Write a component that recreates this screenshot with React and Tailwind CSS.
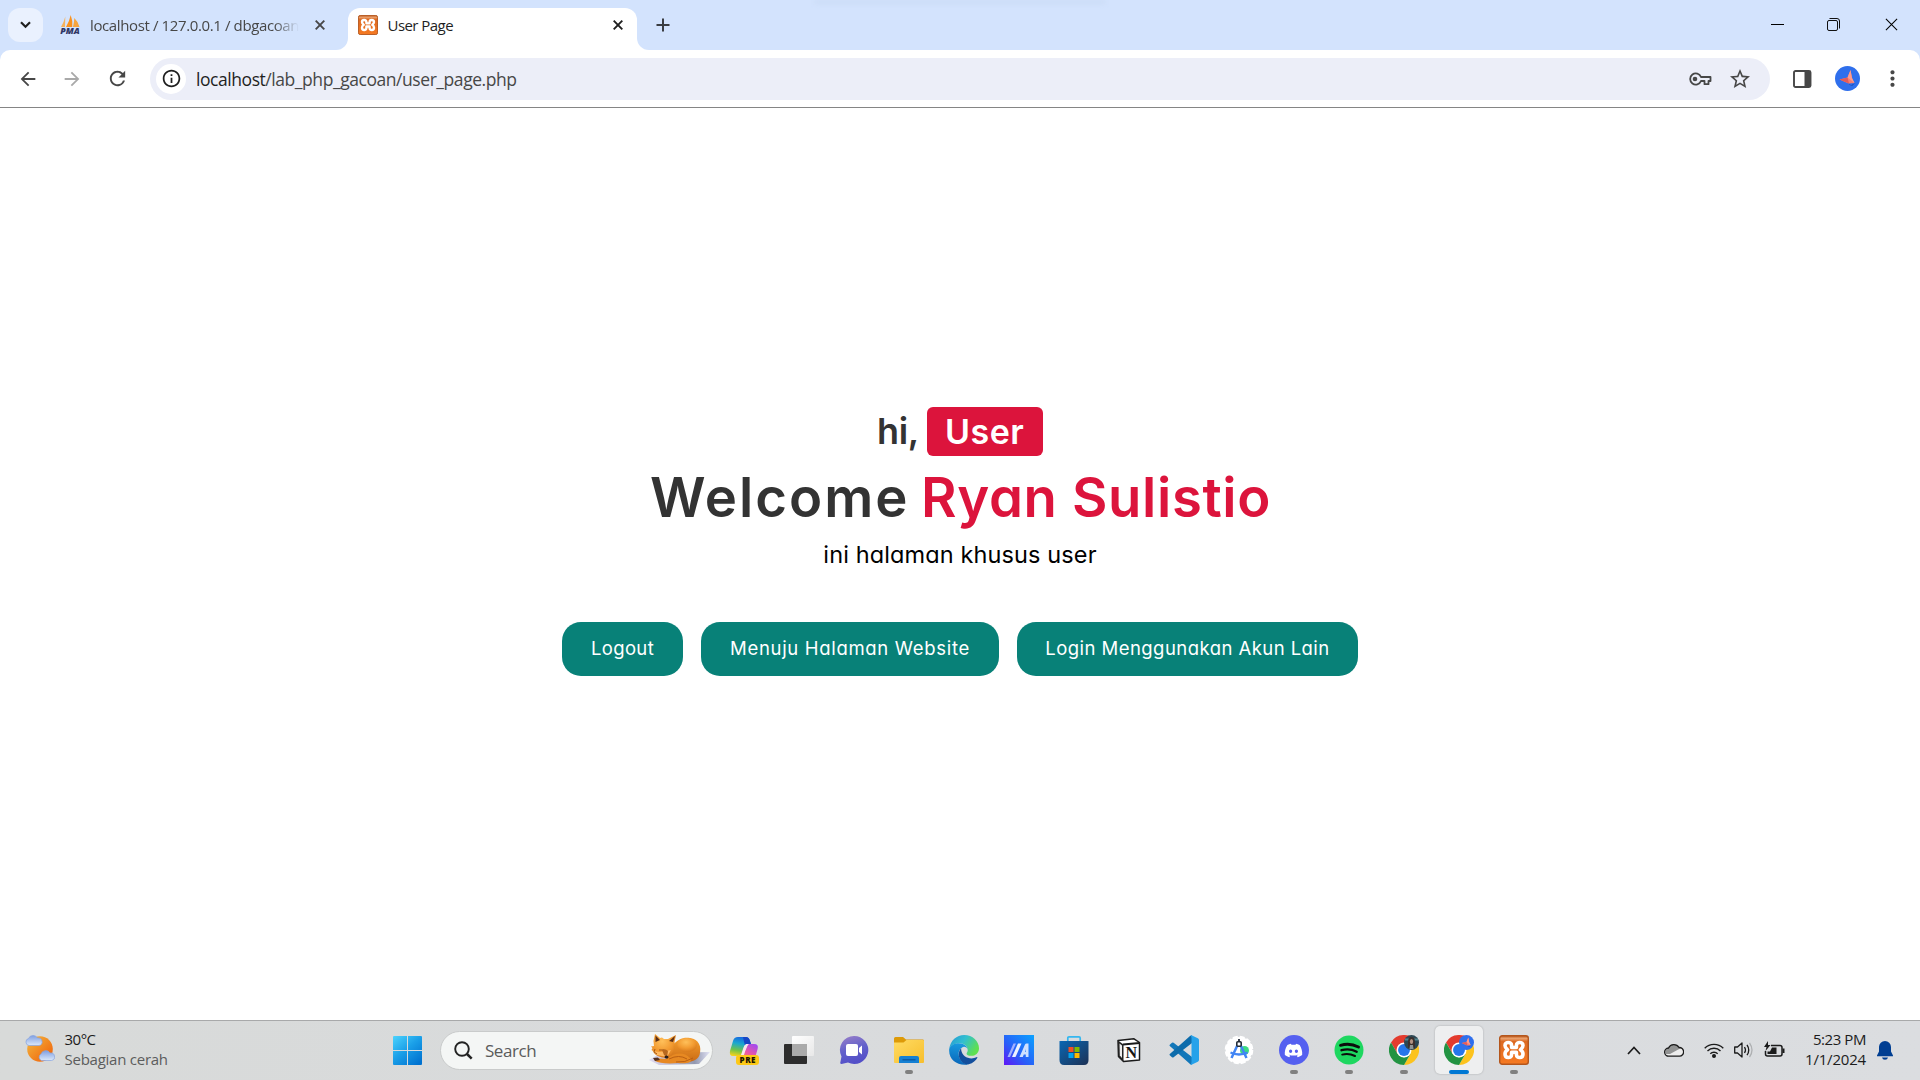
import React from "react";
import { MdArrowBack, MdArrowForward, MdRefresh, MdInfoOutline, MdStarBorder, MdMoreVert } from "react-icons/md";
import { FaDiscord } from "react-icons/fa";

function PmaIcon() {
  return (
    <svg width="20" height="20" viewBox="0 0 20 20" className="shrink-0">
      <path d="M1 12 Q4 7 5.3 1.5 L5 12Z" fill="#f6b25c" />
      <path d="M6 12 Q9.500 6 10.700 0 Q13 6 12.300 12Z" fill="#f9921e" />
      <path d="M13 12 Q14.200 7 14.300 3 Q18.500 7 19.500 12Z" fill="#f7a53e" />
      <text x="10" y="19" textAnchor="middle" textLength="19.500" lengthAdjust="spacingAndGlyphs" fontFamily="Open Sans, sans-serif" fontWeight="800" fontStyle="italic" fontSize="8" fill="#2f3765">PMA</text>
    </svg>
  );
}

function XamppIcon({ size }) {
  return (
    <svg width={size} height={size} viewBox="0 0 30 30" className="shrink-0">
      <defs>
        <linearGradient id="xa" x1="0" y1="0" x2="0" y2="1">
          <stop offset="0" stopColor="#c05a1c" />
          <stop offset="0.1" stopColor="#e9a06c" />
          <stop offset="0.2" stopColor="#dd6a22" />
          <stop offset="1" stopColor="#f67a22" />
        </linearGradient>
      </defs>
      <rect x="0.7" y="0.7" width="28.600" height="28.600" rx="2.500" fill="url(#xa)" stroke="#b4561d" strokeWidth="1.400" />
      <path d="M12.600 12.500V10.500C12.600 6.500 6 6.500 6 10.500C6 12.500 7.200 13.500 8.600 14.800C6.800 16 6 17.300 6 19C6 23.600 12.600 23.600 12.600 19.500V17.200H17.400V19.500C17.400 23.600 24 23.600 24 19C24 17.300 23.200 16 21.400 14.800C22.800 13.500 24 12.500 24 10.500C24 6.500 17.400 6.500 17.400 10.500V12.500Z" fill="none" stroke="#fff" strokeWidth="3.600" strokeLinejoin="round" />
    </svg>
  );
}

function Cross({ className, size = 10, w = 1.9 }) {
  return (
    <svg width={size} height={size} viewBox="0 0 10 10" className={className}>
      <path d="M.7 .7 9.300 9.300M9.300 .7 .7 9.300" stroke="currentColor" strokeWidth={w} fill="none" />
    </svg>
  );
}

function OrigamiAvatar({ size }) {
  return (
    <svg width={size} height={size} viewBox="0 0 25 25">
      <circle cx="12.500" cy="12.500" r="12.500" fill="#2f6fec" />
      <path d="M12 16 17 20 20 17 15.500 19.500Z" fill="#1b49b0" />
      <path d="M4.500 13.500 12.500 11.500 15.500 4 17 12 19.500 17 13.500 17.500Z" fill="#f77f72" />
      <path d="M15.500 4 17 12 19.500 17 12.500 11.500Z" fill="#ff9c8c" />
      <path d="M4.500 13.500 12.500 11.500 14 17.500Z" fill="#e45b58" />
    </svg>
  );
}

function TabStrip() {
  return (
    <div className="relative flex h-[50px] shrink-0 items-start bg-[#d3e3fd]">
      <div className="absolute left-[815px] top-0 h-1 w-[290px] bg-[#cbdcf6] blur-[2px]" />
      <div className="ml-2 mt-2 flex h-[34px] w-[35px] items-center justify-center rounded-[12px] bg-[#eaf1fe]">
        <svg width="11" height="8" viewBox="0 0 11 8"><path d="M1 1.300 5.500 5.800 10 1.300" stroke="#1f1f1f" strokeWidth="2.200" fill="none" /></svg>
      </div>
      <div className="ml-[17px] flex h-[50px] w-[276px] items-center">
        <PmaIcon />
        <div className="ml-[10px] w-[209px] overflow-hidden whitespace-nowrap text-[15px] tracking-[-0.380px] text-[#474747] [mask-image:linear-gradient(to_right,black_88%,transparent)]">localhost / 127.0.0.1 / dbgacoan</div>
        <Cross className="ml-4 text-[#474747]" />
      </div>
      <div className="relative mt-2 flex h-[42px] w-[301px] items-end">
        <div className="h-3 w-3 bg-white">
          <div className="h-3 w-3 rounded-br-[12px] bg-[#d3e3fd]" />
        </div>
        <div className="flex h-[42px] w-[289px] items-center rounded-t-[12px] bg-white pb-2 pl-[10px]">
          <XamppIcon size={20} />
          <div className="ml-[9.5px] flex-1 text-[15px] tracking-[-0.550px] text-[#1f1f1f]">User Page</div>
          <Cross className="mr-[14px] text-[#1f1f1f]" />
        </div>
      </div>
      <div className="flex h-[50px] items-end">
        <div className="h-3 w-3 bg-white">
          <div className="h-3 w-3 rounded-bl-[12px] bg-[#d3e3fd]" />
        </div>
      </div>
      <svg className="ml-[7px] mt-[18px]" width="14" height="14" viewBox="0 0 14 14"><path d="M7 .5V13.500M.5 7H13.500" stroke="#3a3d42" strokeWidth="2" /></svg>
      <div className="ml-auto flex h-[49px] items-center pr-[22px] text-black">
        <div className="h-px w-[13px] bg-black" />
        <svg className="ml-[43px]" width="13" height="13" viewBox="0 0 13 13" fill="none" stroke="#111"><rect x=".5" y="2.500" width="10" height="10" rx="1.500" /><path d="M2.500 .5H10Q12.500 .5 12.500 3V10.500" /></svg>
        <Cross className="ml-[45px]" size={13} w={0.8} />
      </div>
    </div>
  );
}

function Toolbar() {
  return (
    <div className="h-[58px] shrink-0 bg-[#d3e3fd]">
      <div className="flex h-[58px] items-center rounded-t-[10px] border-b border-[#858585] bg-white text-[#474747]">
        <MdArrowBack className="ml-[17px]" size={22} />
        <MdArrowForward className="ml-[22px] text-[#a9a9a9]" size={22} />
        <MdRefresh className="ml-[23px]" size={23} />
        <div className="ml-[21px] flex h-[42px] w-[1620px] items-center rounded-full bg-[#eceef8] pl-[6px]">
          <div className="flex h-[30px] w-[30px] items-center justify-center rounded-full bg-white text-[#1f1f1f]">
            <MdInfoOutline size={21} />
          </div>
          <div className="ml-[10px] flex-1 pt-[2px] text-[17.5px] tracking-[-0.440px]">
            <span className="text-[#1f1f1f]">localhost</span>/lab_php_gacoan/user_page.php
          </div>
          <svg width="24" height="14" viewBox="0 0 24 14" fill="none" stroke="#474747" strokeWidth="1.800"><path d="M13 5H22.500V9H20.500V12.200H16.500V9H13A5.600 5.600 0 1 1 13 5Z" strokeLinejoin="round" /><circle cx="7" cy="7" r="2.300" fill="#474747" stroke="none" /></svg>
          <MdStarBorder size={24} className="ml-4 mr-[18px]" />
        </div>
        <svg className="ml-[23px]" width="19" height="18" viewBox="0 0 19 18"><rect x="1" y="1" width="16.500" height="16" rx="1.500" fill="none" stroke="#474747" strokeWidth="1.900" /><path d="M11.500 1H17V17H11.500Z" fill="#474747" /></svg>
        <div className="ml-[23px] pb-px"><OrigamiAvatar size={25} /></div>
        <MdMoreVert className="ml-5" size={25} />
      </div>
    </div>
  );
}

function Button({ children }) {
  return <div className="h-[54px] rounded-[19px] bg-[#088178] text-center text-[18.5px] leading-[53px]">{children}</div>;
}

function Content() {
  return (
    <main className="flex flex-1 flex-col items-center bg-white pt-[299px] font-['Inter',sans-serif] [font-feature-settings:'cv11']">
      <div className="flex h-[49px] leading-[49px]">
        <div className="w-[50px] text-[36px] font-semibold tracking-[-0.300px] text-[#333]">hi,</div>
        <div className="w-[116px] rounded-[6px] bg-[#dc143c] pl-[18px] text-[34px] font-semibold tracking-[0.500px] text-white">User</div>
      </div>
      <div className="flex h-20 whitespace-nowrap text-[54.5px] font-semibold leading-[82px]">
        <div className="w-[271px] tracking-[2px] text-[#333]">Welcome</div>
        <div className="w-[349px] tracking-[0.650px] text-[#dc143c]">Ryan Sulistio</div>
      </div>
      <div className="h-[37px] text-[23.5px] leading-[37px] tracking-[0.120px] text-black">ini halaman khusus user</div>
      <div className="mt-[49px] flex whitespace-nowrap text-white">
        <div className="w-[139px]"><div className="w-[121px] tracking-[0.350px]"><Button>Logout</Button></div></div>
        <div className="w-[316px]"><div className="w-[298px] tracking-[0.680px]"><Button>Menuju Halaman Website</Button></div></div>
        <div className="w-[341px] tracking-[0.450px]"><Button>Login Menggunakan Akun Lain</Button></div>
      </div>
    </main>
  );
}

function Weather() {
  return (
    <svg width="30" height="29" viewBox="0 0 30 29">
      <defs>
        <linearGradient id="sun" x1="0" y1="0" x2="1" y2="1"><stop offset="0.100" stopColor="#f3b13b" /><stop offset="0.900" stopColor="#f0640c" /></linearGradient>
        <linearGradient id="cl" x1="0" y1="0" x2="0" y2="1"><stop offset="0" stopColor="#7f9fe2" /><stop offset="1" stopColor="#dbe8fa" /></linearGradient>
      </defs>
      <circle cx="15" cy="15" r="12.800" fill="url(#sun)" />
      <path d="M4 11.500A3.600 3.600 0 0 1 3.500 4.500 5 5 0 0 1 12.500 4 3.800 3.800 0 0 1 14 11.500Z" fill="url(#cl)" stroke="#86a3e0" strokeWidth=".7" />
      <path d="M16.500 26.500A3.600 3.600 0 0 1 16 20 5 5 0 0 1 25 19 3.800 3.800 0 0 1 26.500 26.500Z" fill="url(#cl)" stroke="#86a3e0" strokeWidth=".7" />
    </svg>
  );
}

function StartIcon() {
  return (
    <svg width="29" height="29" viewBox="0 0 29 29">
      <defs><linearGradient id="win" gradientUnits="userSpaceOnUse" x1="0" y1="0" x2="24" y2="29"><stop offset="0" stopColor="#4cd3fd" /><stop offset=".5" stopColor="#1a9fe8" /><stop offset="1" stopColor="#0072d0" /></linearGradient></defs>
      <path d="M1 0H14V14H0V1Q0 0 1 0ZM15 0H28Q29 0 29 1V14H15ZM0 15H14V29H1Q0 29 0 28ZM15 15H29V28Q29 29 28 29H15Z" fill="url(#win)" />
    </svg>
  );
}

function Fox() {
  return (
    <svg width="62" height="34" viewBox="0 0 62 34">
      <defs>
        <linearGradient id="fb" x1="0" y1="0" x2="0" y2="1"><stop offset="0" stopColor="#f6a02e" /><stop offset="1" stopColor="#c96a15" /></linearGradient>
        <linearGradient id="fs" x1="0" y1="0" x2="1" y2="0"><stop offset="0" stopColor="#dcd6f2" /><stop offset=".75" stopColor="#8088a4" /><stop offset="1" stopColor="#dfe0f6" /></linearGradient>
        <radialGradient id="fh" cx=".45" cy=".3" r=".7"><stop offset="0" stopColor="#ffc05a" /><stop offset=".6" stopColor="#f29a30" /><stop offset="1" stopColor="#d87a1c" /></radialGradient>
      </defs>
      <path d="M0 27 12 20 61 19 50 31 10 32Z" fill="url(#fs)" opacity=".85" />
      <path d="M23 14C28 5 36 4 41 5 50 6 53 14 50.500 22 48 29 38 30 28 29L17 26Z" fill="url(#fb)" />
      <ellipse cx="38" cy="12" rx="10" ry="7" fill="url(#fh)" />
      <path d="M5 13 4.500 8 6 1 11 5 13 4.500 15 6 19 6 27 2 25.500 9 26 12 24.500 13 25 16C24 20 21 24 18 25 11 25 5 22 4 18L2.500 17 3.500 15 2 13.500Z" fill="url(#fh)" />
      <path d="M6.500 9 6.500 2.500 11 7ZM20 8 26 3 24 9Z" fill="#5c2f17" />
      <path d="M3.500 18 8 22 18 24 22 17 17 18 11 19Z" fill="#ffb861" />
      <path d="M6 16 5 19 8 21M10 17 15 17" stroke="#a35510" strokeWidth="1" fill="none" />
      <path d="M18 26C26 19 35 19 41 25 45 30 36 31 29 30 18 31 10 30 6 28L5 25Z" fill="#e78922" />
      <path d="M20 26Q30 21 38 26M27 29Q36 30 44 25" stroke="#b95f12" strokeWidth="1" fill="none" />
      <path d="M13 17Q16 15 19 18L18 24 15 22Z" fill="#b7681e" />
      <ellipse cx="17.500" cy="24" rx="2" ry="1.500" fill="#281d1d" />
      <path d="M4 25 9 24.500 11 27 6 28Z" fill="#54301f" />
    </svg>
  );
}

function Copilot() {
  return (
    <svg width="30" height="30" viewBox="0 0 30 30">
      <defs>
        <linearGradient id="ca" x1=".5" y1="0" x2=".3" y2="1"><stop offset="0" stopColor="#1668e0" /><stop offset=".35" stopColor="#1ba8cf" /><stop offset=".7" stopColor="#6fc34a" /><stop offset="1" stopColor="#f4d21c" /></linearGradient>
        <linearGradient id="cb" x1=".8" y1="0" x2=".2" y2="1"><stop offset="0" stopColor="#a24af0" /><stop offset=".5" stopColor="#e957a8" /><stop offset="1" stopColor="#ff8d50" /></linearGradient>
      </defs>
      <path d="M19 9H25Q30 9 28.600 14L26 23Q25 27 20 27H11Z" fill="url(#cb)" />
      <path d="M9 2H17Q20 2 21 6L22 9H19Q16 9 15 12L13 19Q12 21 9 21H4Q0 21 1 16L4 6Q5 2 9 2Z" fill="url(#ca)" />
      <path d="M14 2H17Q20 2 21 6L22 9H19Q17 9 16 11Z" fill="#1746c5" />
      <path d="M17 9Q15 10 14 14L12 20H15Q18 10 20 9Z" fill="#f8e8ee" />
      <rect x="7" y="20" width="23" height="10" rx="3" fill="#fdc916" />
      <text x="18.500" y="28" textAnchor="middle" fontSize="8" fontWeight="800" fontFamily="Open Sans, sans-serif" textLength="16" fill="#1b1500">PRE</text>
    </svg>
  );
}

function TaskView() {
  return (
    <svg width="30" height="30" viewBox="0 0 30 30">
      <defs><linearGradient id="tv" x1="0" y1="0" x2="1" y2="1"><stop offset="0" stopColor="#fff" /><stop offset="1" stopColor="#e8e8e8" /></linearGradient></defs>
      <rect x="0" y="9" width="23" height="20" rx="1" fill="#2d2d2d" />
      <rect x="8" y="1" width="22" height="20" rx="1" fill="url(#tv)" />
      <path d="M8 9H23V21H8Z" fill="#aaa" />
    </svg>
  );
}

function Chat() {
  return (
    <svg width="30" height="30" viewBox="0 0 30 30">
      <defs><linearGradient id="ch" x1="0" y1="0" x2=".3" y2="1"><stop offset="0" stopColor="#9a80c8" /><stop offset=".55" stopColor="#6361cb" /><stop offset="1" stopColor="#5450c8" /></linearGradient></defs>
      <path d="M15 1A14 14 0 1 1 9 27.500L2.500 29Q1 29 1.300 27.500L2.500 21.500A14 14 0 0 1 15 1Z" fill="url(#ch)" />
      <rect x="7" y="9" width="12" height="12" rx="2" fill="#fff" />
      <path d="M20 13 23 10.500V19.500L20 17Z" fill="#fff" />
    </svg>
  );
}

function Folder() {
  return (
    <svg width="30" height="30" viewBox="0 0 30 30">
      <defs><linearGradient id="fo" x1="0" y1="0" x2="1" y2="1"><stop offset="0" stopColor="#ffdb62" /><stop offset="1" stopColor="#f7be2d" /></linearGradient></defs>
      <path d="M0 3.500Q0 2 1.500 2H9L12 4.500H29Q30 4.500 30 6V12H0Z" fill="#dd9a08" />
      <path d="M0 7.500H9.500L12.500 5H29Q30 5 30 6V27Q30 28 29 28H1Q0 28 0 27Z" fill="url(#fo)" />
      <path d="M5 28V23Q5 21 7 21H23Q25 21 25 23V28Z" fill="#1580d3" />
      <path d="M8.500 24.800H21.500" stroke="#0a529c" strokeWidth="1.200" />
    </svg>
  );
}

function Edge() {
  return (
    <svg width="30" height="30" viewBox="0 0 256 256">
      <defs>
        <linearGradient id="ea" x1="0" y1="0" x2="1" y2=".5"><stop offset="0" stopColor="#2596d5" /><stop offset=".5" stopColor="#32bfd0" /><stop offset="1" stopColor="#5fe04f" /></linearGradient>
        <linearGradient id="eb" x1=".5" y1="0" x2=".4" y2="1"><stop offset="0" stopColor="#189be0" /><stop offset="1" stopColor="#0966b9" /></linearGradient>
      </defs>
      <path d="M2 118C10 48 66 0 130 0C202 0 256 54 256 112C256 154 224 178 190 178C164 178 150 168 150 160C150 152 160 146 160 128C160 98 132 70 88 70C48 70 14 92 2 118Z" fill="url(#ea)" />
      <path d="M2 118C14 88 48 70 82 70C130 70 158 98 160 126C154 104 136 98 122 102C94 110 72 146 88 190C102 232 140 252 172 250C82 272 -8 216 2 118Z" fill="url(#eb)" />
      <path d="M104 112C76 140 76 188 106 224C124 246 148 252 168 250C206 240 230 216 242 194C244 189 240 187 235 190C182 216 112 188 104 128Z" fill="#134f9d" />
    </svg>
  );
}

function MyAsus() {
  return (
    <svg width="30" height="30" viewBox="0 0 30 30">
      <defs><linearGradient id="as" x1="0" y1="1" x2="1" y2="0"><stop offset="0" stopColor="#6115f5" /><stop offset=".4" stopColor="#2a5df8" /><stop offset="1" stopColor="#0aa2ff" /></linearGradient></defs>
      <rect width="30" height="30" fill="url(#as)" />
      <path d="M3.500 22 9.500 8.500H12L6 22Z" fill="#a3b0ff" />
      <path d="M8 22 14 8.500H17.500L11.500 22Z" fill="#eef2ff" />
      <path d="M15.500 22 21 9.500Q21.500 8.500 22.500 8.500H24.500V22H21.800V19.500H19.800L18.800 22ZM21 17H21.800V14Z" fill="#cfe0ff" fillRule="evenodd" />
    </svg>
  );
}

function Store() {
  return (
    <svg width="30" height="30" viewBox="0 0 30 30">
      <defs><linearGradient id="st" x1="0" y1="0" x2="1" y2="1"><stop offset="0" stopColor="#0967b3" /><stop offset="1" stopColor="#1d3155" /></linearGradient></defs>
      <path d="M8.800 7V3Q8.800 1.800 10 1.800H20Q21.200 1.800 21.200 3V7" fill="none" stroke="#35b7ef" strokeWidth="1.700" />
      <path d="M.5 6.500Q.5 6 1.500 6H28.500Q29.500 6 29.500 6.500V25Q29.500 30 25 30H5Q.5 30 .5 25Z" fill="url(#st)" />
      <path d="M9.500 12H14.500V17H9.500Z" fill="#f25022" /><path d="M15.500 12H20.500V17H15.500Z" fill="#7fba00" />
      <path d="M9.500 18H14.500V23H9.500Z" fill="#00a4ef" /><path d="M15.500 18H20.500V23H15.500Z" fill="#ffb900" />
    </svg>
  );
}

function Notion() {
  return (
    <svg width="30" height="30" viewBox="0 0 30 30">
      <path d="M4 5.500 20 3.800 25.500 7.500V25L9.500 26.500 4.500 21.500Z" fill="#fff" stroke="#1a1a1a" strokeWidth="1.500" strokeLinejoin="round" />
      <path d="M4 5.500 9.500 9.500V26.500L4.500 21.500Z" fill="#252525" />
      <path d="M5.500 8.500 8 10.500V23L5.800 20.500Z" fill="#eee" />
      <path d="M9 9.500 25.500 8" stroke="#1a1a1a" strokeWidth="2" />
      <text x="17.200" y="22.500" textAnchor="middle" fontFamily="Liberation Serif, serif" fontWeight="700" fontSize="16" fill="#161616">N</text>
    </svg>
  );
}

function VsCode() {
  return (
    <svg width="30" height="30" viewBox="0 0 30 30">
      <path d="M1 9.500 3 7.800Q3.800 7.200 4.600 7.800L23 22V29.500Q22 29.800 21 29L.8 11Q0 10.200 1 9.500Z" fill="#1277b9" />
      <path d="M1 20.500 3 22.200Q3.800 22.800 4.600 22.200L23 8V.5Q22 .2 21 1L.8 19Q0 19.800 1 20.500Z" fill="#0d6cab" />
      <path d="M21.500 29.500Q22.500 28.500 22.500 27V3Q22.500 1.500 21.500 .5Q22 0 23 .4L28.800 3.200Q30 3.800 30 5V25Q30 26.200 28.800 26.800L23 29.600Q22 30 21.500 29.500Z" fill="#26a2ea" />
    </svg>
  );
}

function AndroidStudio() {
  return (
    <svg width="30" height="30" viewBox="0 0 30 30">
      <circle cx="15" cy="15" r="13.300" fill="#fff" stroke="#fff" strokeWidth="2" strokeDasharray="5 2" />
      <circle cx="20.500" cy="15.500" r="4.500" fill="#3ddc84" />
      <path d="M14 9 7.500 23M16 9 22.500 23" stroke="#4285f4" strokeWidth="2.500" />
      <path d="M6.500 17.500Q15 21.500 23.500 17.500" stroke="#4285f4" strokeWidth="2.300" fill="none" />
      <path d="M15 4V7" stroke="#222b38" strokeWidth="1.800" />
      <rect x="12.800" y="6.800" width="4.400" height="4.400" rx="1" fill="#fff" stroke="#222b38" strokeWidth="1.600" />
    </svg>
  );
}

function Discord() {
  return (
    <div className="flex h-[30px] w-[30px] items-center justify-center rounded-full bg-[#5560f0] text-white">
      <FaDiscord size={19} />
    </div>
  );
}

function Spotify() {
  return (
    <svg width="30" height="30" viewBox="0 0 30 30">
      <circle cx="15" cy="15" r="14.500" fill="#1ed760" />
      <g fill="none" stroke="#0c0c0c" strokeLinecap="round"><path d="M6.500 10.300Q16 7.600 24.500 12" strokeWidth="2.900" /><path d="M7.500 15.200Q15.500 13 22.700 16.700" strokeWidth="2.400" /><path d="M8.200 19.600Q15 18 21 21" strokeWidth="2" /></g>
    </svg>
  );
}

function Chrome({ profile }) {
  return (
    <div className="relative h-[30px] w-[30px]">
      <svg width="30" height="30" viewBox="0 0 48 48">
        <path d="M24 12H44.800A24 24 0 0 1 24 48L34.400 30Z" fill="#fcc31e" />
        <path d="M24 12H44.800A24 24 0 0 0 3.200 12L13.600 30Z" fill="#e33b2e" />
        <path d="M3.200 12 13.600 30 24 36 34.400 30 24 48A24 24 0 0 1 3.200 12Z" fill="#229342" />
        <circle cx="24" cy="24" r="12" fill="#fff" />
        <circle cx="24" cy="24" r="9.500" fill="#2676ea" />
      </svg>
      <div className="absolute right-0 top-0">
        {profile === "photo" ? (
          <svg width="15" height="15" viewBox="0 0 15 15">
            <circle cx="7.500" cy="7.500" r="7.500" fill="#2d4753" />
            <path d="M1 4.500H14" stroke="#4e8590" strokeWidth="2" />
            <path d="M4 13V7Q4 2 7.500 2T11 7V13Z" fill="#3b302d" />
            <ellipse cx="7.500" cy="6.500" rx="1.600" ry="2.500" fill="#b59382" />
            <path d="M6 10H9L9.500 14H5.500Z" fill="#8f9494" />
          </svg>
        ) : (
          <OrigamiAvatar size={15} />
        )}
      </div>
    </div>
  );
}

const apps = [
  { icon: <Copilot /> },
  { icon: <TaskView /> },
  { icon: <Chat /> },
  { icon: <Folder />, open: true },
  { icon: <Edge /> },
  { icon: <MyAsus /> },
  { icon: <Store /> },
  { icon: <Notion /> },
  { icon: <VsCode /> },
  { icon: <AndroidStudio /> },
  { icon: <Discord />, open: true },
  { icon: <Spotify />, open: true },
  { icon: <Chrome profile="photo" />, open: true },
  { icon: <Chrome profile="origami" />, active: true },
  { icon: <XamppIcon size={30} />, open: true },
];

function Taskbar() {
  return (
    <footer className="flex h-[60px] shrink-0 items-center border-t border-[#a8a9aa] bg-gradient-to-r from-[#d8dad9] via-[#d9dbdd] to-[#dbdde0] pb-px">
      <div className="flex w-[393px] items-center pl-[25px]">
        <div className="pb-[3px]"><Weather /></div>
        <div className="ml-[9.5px] pb-[3px] text-[15px] leading-5">
          <div className="tracking-[-0.500px] text-[#1c1c1c]">30°C</div>
          <div className="tracking-[-0.250px] text-[#5c5d5d]">Sebagian cerah</div>
        </div>
      </div>
      <StartIcon />
      <div className="ml-[18px] flex h-[39px] w-[273px] items-center rounded-full border border-[#c9cbcb] bg-[#f4f6f5] pl-[13px]">
        <svg width="19" height="19" viewBox="0 0 19 19" fill="none" stroke="#222"><circle cx="8" cy="8" r="6.800" strokeWidth="1.900" /><path d="M13 13 17.700 17.700" strokeWidth="2.500" /></svg>
        <div className="ml-3 flex-1 pt-px text-[17px] tracking-[-0.450px] text-[#5a5b5b]">Search</div>
        <div className="mr-px"><Fox /></div>
      </div>
      <div className="ml-[3px] flex">
        {apps.map((app, i) => (
          <div key={i} className="flex w-[55px] shrink-0 justify-center">
            <div className={app.active ? "relative flex h-12 w-12 items-center justify-center rounded-[5px] bg-[#eeeff0] shadow-[0_0_2px_rgba(0,0,0,0.250)]" : "relative flex h-12 w-12 items-center justify-center"}>
              {app.icon}
              {app.open && <div className="absolute bottom-0 left-5 h-1 w-2 rounded-full bg-[#808080]" />}
              {app.active && <div className="absolute bottom-0 left-[14px] h-1 w-5 rounded-full bg-[#0078d4]" />}
            </div>
          </div>
        ))}
      </div>
      <svg className="ml-[86px]" width="14" height="9" viewBox="0 0 14 9"><path d="M1 8 7 1.500 13 8" stroke="#1b1b1b" strokeWidth="1.700" fill="none" /></svg>
      <svg className="ml-[23px]" width="20" height="14" viewBox="0 0 20 14">
        <path d="M5 13.200A4 4 0 0 1 4.500 5 6 6 0 0 1 15 4.500 4.300 4.300 0 0 1 15.500 13.200Z" fill="#ededed" />
        <path d="M4.500 5A6 6 0 0 1 15 4.500L17 5 6 11 2 11Q0 7 4.500 5Z" fill="#929393" />
        <path d="M5 13.200A4 4 0 0 1 4.500 5 6 6 0 0 1 15 4.500 4.300 4.300 0 0 1 15.500 13.200Z" fill="none" stroke="#1b1b1b" strokeWidth="1.300" />
      </svg>
      <svg className="ml-5" width="20" height="16" viewBox="0 0 20 16" fill="none" stroke="#1b1b1b" strokeWidth="1.400"><path d="M.7 6.200A13.200 13.200 0 0 1 19.300 6.200M3.500 9A9.200 9.200 0 0 1 16.500 9M6.300 11.700A5.300 5.300 0 0 1 13.700 11.700" /><circle cx="10" cy="14" r="1.300" fill="#1b1b1b" /></svg>
      <svg className="ml-[10px]" width="20" height="18" viewBox="0 0 20 18" fill="none" stroke="#1b1b1b" strokeWidth="1.300"><path d="M.7 6H3.500L8 2V16L3.500 12H.7Z" strokeLinejoin="round" /><path d="M10.500 6Q12.500 9 10.500 12M13 3.800Q16.500 9 13 14.200" /><path d="M15.500 1.800Q20.500 9 15.500 16.200" stroke="#aeb0b2" /></svg>
      <svg className="ml-[10px]" width="21" height="18" viewBox="0 0 21 18"><path d="M7 4.500H16Q18 4.500 18 6.500V13Q18 15 16 15H3.500Q1.500 15 1.500 13V10" fill="none" stroke="#1b1b1b" strokeWidth="1.500" /><path d="M8 6.500H12.500V13H3.500V10.500H6Z" fill="#1b1b1b" /><path d="M18.500 7.500H20.500V12H18.500Z" fill="#1b1b1b" /><path d="M4 0 0 6H2.500L1.500 10 6.500 4H4Z" fill="#1b1b1b" /></svg>
      <div className="ml-5 w-[61px] whitespace-nowrap pb-[3px] text-right text-[15px] leading-5 text-[#1c1c1c]">
        <div className="tracking-[-0.440px]">5:23 PM</div>
        <div className="tracking-[-0.180px]">1/1/2024</div>
      </div>
      <svg className="ml-[11px]" width="16" height="19" viewBox="0 0 16 19"><path d="M8 0A6 6 0 0 1 14 6V10.500L16 14.500V15.200H0V14.500L2 10.500V6A6 6 0 0 1 8 0ZM5 16.500H11Q10.500 18.700 8 18.700T5 16.500Z" fill="#003e92" /></svg>
    </footer>
  );
}

export default function App() {
  return (
    <div className="flex h-[1080px] w-[1920px] flex-col overflow-hidden bg-white font-['Open_Sans',sans-serif]">
      <TabStrip />
      <Toolbar />
      <Content />
      <Taskbar />
    </div>
  );
}
